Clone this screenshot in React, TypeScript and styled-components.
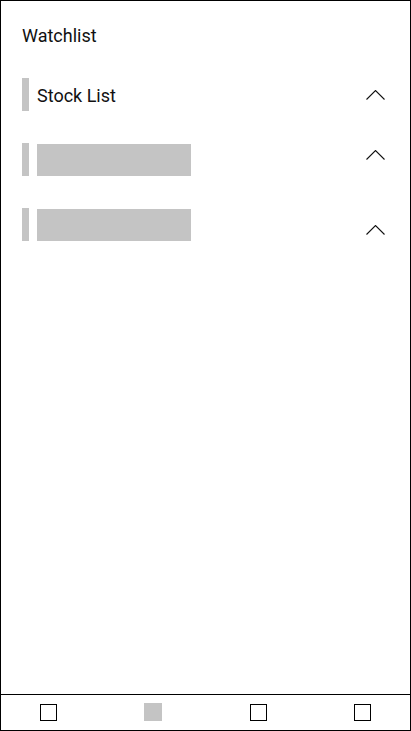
import React from 'react';
import styled, { createGlobalStyle } from 'styled-components';

const GlobalStyle = createGlobalStyle`
    html, body {
        margin: 0;
        padding: 0;
        background: #ffffff;
    }
    * {
        box-sizing: border-box;
    }
`;

const Screen = styled.div`
    width: 411px;
    height: 731px;
    border: 1px solid #000000;
    display: flex;
    flex-direction: column;
    font-family: Roboto, 'Liberation Sans', sans-serif;
    color: #111111;
    background: #ffffff;
`;

const Content = styled.main`
    flex: 1;
    display: flex;
    flex-direction: column;
    gap: 32px;
    padding: 25px 25px 0 21px;
`;

const Title = styled.h1`
    margin: 0;
    font-size: 18px;
    font-weight: 400;
    line-height: 20px;
`;

const Row = styled.div`
    display: flex;
    align-items: flex-start;
    height: 33px;
`;

const Label = styled.div`
    flex: 1;
    display: flex;
    align-items: center;
    gap: 8px;
    height: 33px;
`;

const Marker = styled.span`
    width: 7px;
    height: 33px;
    background: #c4c4c4;
`;

const RowText = styled.span`
    font-size: 18px;
    line-height: 21px;
    padding-top: 1px;
`;

const Placeholder = styled.span`
    width: 154px;
    height: 32px;
    background: #c4c4c4;
`;

const Chevron = styled.svg<{ $offset: number }>`
    display: block;
    width: 19px;
    height: 10px;
    margin-top: ${(p) => 12 + p.$offset}px;
`;

const NavBar = styled.nav`
    height: 36px;
    border-top: 1px solid #000000;
    display: flex;
    align-items: center;
    justify-content: space-between;
    padding: 0 39px 1px 39px;
`;

const NavIcon = styled.span<{ $active?: boolean }>`
    width: ${(p) => (p.$active ? 18 : 17)}px;
    height: ${(p) => (p.$active ? 18 : 17)}px;
    border: ${(p) => (p.$active ? 'none' : '1px solid #000000')};
    background: ${(p) => (p.$active ? '#c4c4c4' : 'transparent')};
`;

const ChevronUp = ({ offset }: { offset: number }) => (
    <Chevron $offset={offset} viewBox="0 0 19 10">
        <path d="M0.5 9.5 L9.5 0.5 L18.5 9.5" fill="none" stroke="#111111" strokeWidth="1.1" />
    </Chevron>
);

const sections = [
    { name: 'Stock List', offset: 0 },
    { name: '', offset: -5 },
    { name: '', offset: 5 },
];

const App = () => {
    return (
        <>
            <GlobalStyle />
            <Screen>
                <Content>
                    <Title>Watchlist</Title>
                    {sections.map((s, i) => (
                        <Row key={i}>
                            <Label>
                                <Marker />
                                {s.name ? <RowText>{s.name}</RowText> : <Placeholder />}
                            </Label>
                            <ChevronUp offset={s.offset} />
                        </Row>
                    ))}
                </Content>
                <NavBar>
                    <NavIcon />
                    <NavIcon $active />
                    <NavIcon />
                    <NavIcon />
                </NavBar>
            </Screen>
        </>
    );
};

export default App;
